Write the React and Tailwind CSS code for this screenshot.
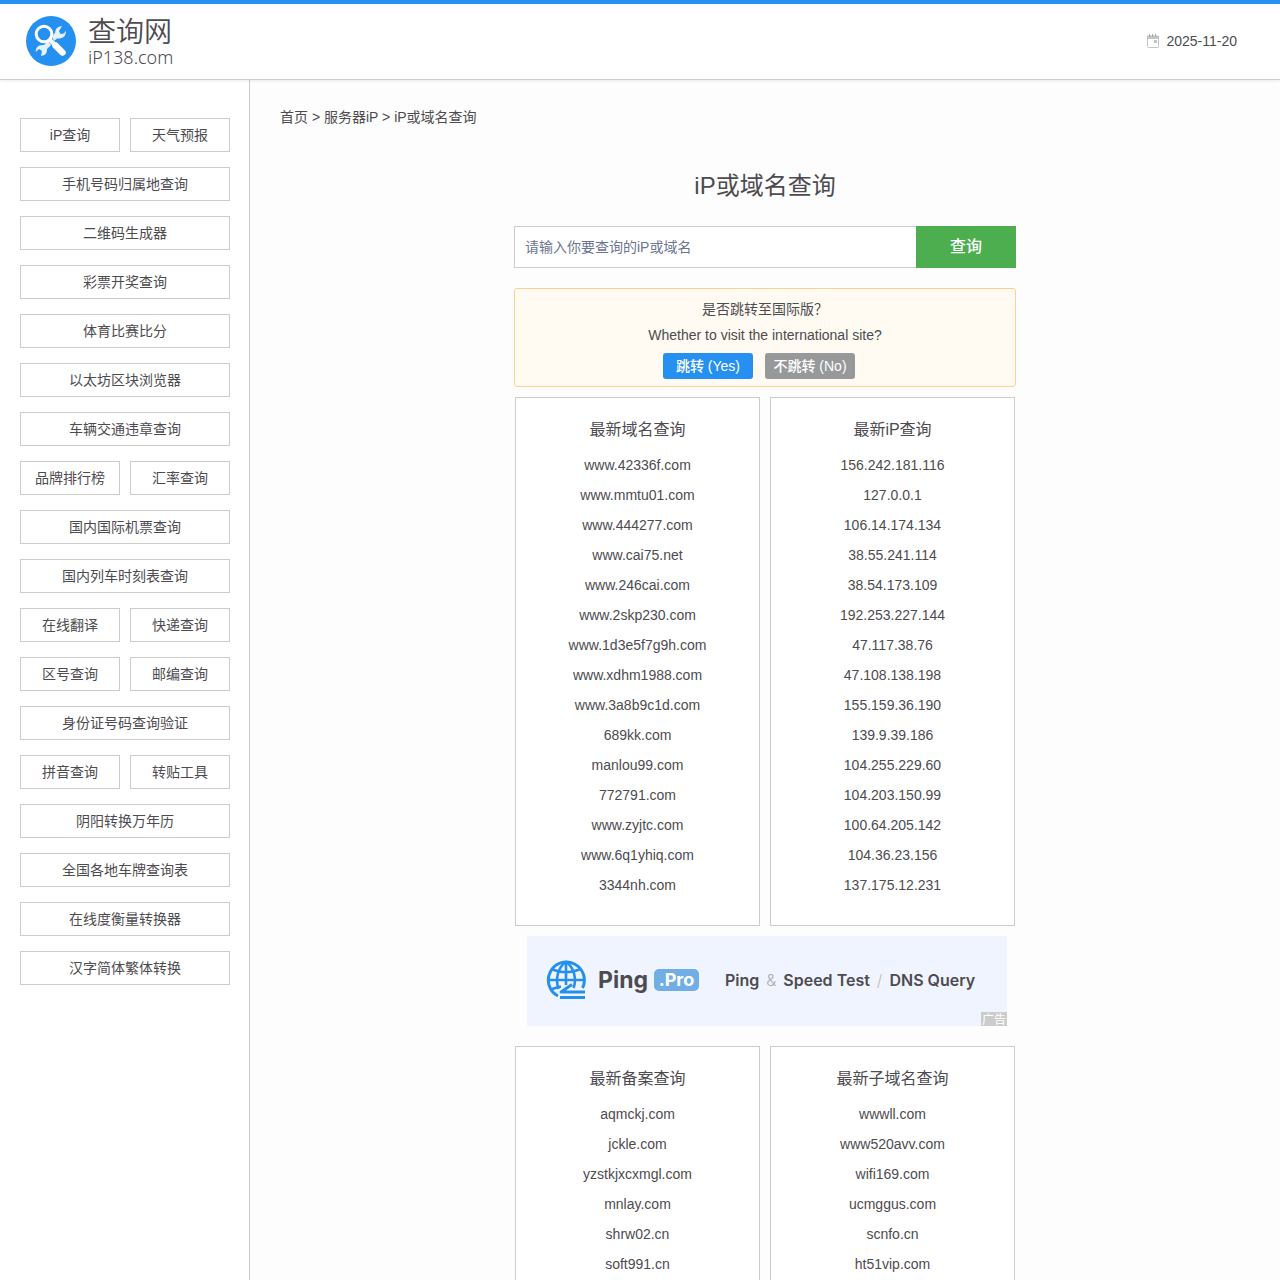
const sans = "font-['Liberation_Sans','Noto_Sans_CJK_SC',sans-serif]";

const navRows = [
  ["iP查询", "天气预报"],
  ["手机号码归属地查询"],
  ["二维码生成器"],
  ["彩票开奖查询"],
  ["体育比赛比分"],
  ["以太坊区块浏览器"],
  ["车辆交通违章查询"],
  ["品牌排行榜", "汇率查询"],
  ["国内国际机票查询"],
  ["国内列车时刻表查询"],
  ["在线翻译", "快递查询"],
  ["区号查询", "邮编查询"],
  ["身份证号码查询验证"],
  ["拼音查询", "转贴工具"],
  ["阴阳转换万年历"],
  ["全国各地车牌查询表"],
  ["在线度衡量转换器"],
  ["汉字简体繁体转换"],
];

const domains = ["www.42336f.com", "www.mmtu01.com", "www.444277.com", "www.cai75.net", "www.246cai.com", "www.2skp230.com", "www.1d3e5f7g9h.com", "www.xdhm1988.com", "www.3a8b9c1d.com", "689kk.com", "manlou99.com", "772791.com", "www.zyjtc.com", "www.6q1yhiq.com", "3344nh.com"];
const ips = ["156.242.181.116", "127.0.0.1", "106.14.174.134", "38.55.241.114", "38.54.173.109", "192.253.227.144", "47.117.38.76", "47.108.138.198", "155.159.36.190", "139.9.39.186", "104.255.229.60", "104.203.150.99", "100.64.205.142", "104.36.23.156", "137.175.12.231"];
const records = ["aqmckj.com", "jckle.com", "yzstkjxcxmgl.com", "mnlay.com", "shrw02.cn", "soft991.cn"];
const subdomains = ["wwwll.com", "www520avv.com", "wifi169.com", "ucmggus.com", "scnfo.cn", "ht51vip.com"];

function LogoMark() {
  return (
    <svg viewBox="0 0 50 50" className="size-[50px]" aria-hidden="true">
      <circle cx="25" cy="25" r="25" fill="#2590f0" />
      <path d="M26 20 L29 17 Q29 11 36 10 L33 15 L34.5 18 L38 17.5 L40 14.5 Q40.5 21 34 22.5 L31 22.5 L28 25Z" fill="#e4f1fe" />
      <path d="M22 25 L18 29 Q10 28 9.5 36 L13 33 L16 35 L15 40 Q21.5 39 21 33 L25 29Z" fill="#e4f1fe" />
      <path d="M24 24 L32 32" stroke="#fff" strokeWidth="4" />
      <path d="M29.5 29.5 L36.5 36.5" stroke="#fff" strokeWidth="6.5" strokeLinecap="round" />
      <circle cx="18" cy="18" r="7.8" fill="#2590f0" stroke="#fff" strokeWidth="3" />
    </svg>
  );
}

function CalendarIcon() {
  return (
    <svg viewBox="0 0 12 14" className="h-3.5 w-3" aria-hidden="true">
      <path d="M0.5 2 V12.5 Q0.5 13.5 1.5 13.5 H10.5 Q11.5 13.5 11.5 12.5 V2" fill="none" stroke="#c4c4c4" />
      <path d="M0 1.5H12V5H0Z" fill="#c4c4c4" />
      <path d="M2.5 0V3M5.5 0V3M8.5 0V3" stroke="#a8a8a8" />
      <rect x="7" y="6" width="3" height="3" fill="#c4c4c4" />
    </svg>
  );
}

function GlobeIcon() {
  return (
    <svg viewBox="0 0 40 40" className="size-10" fill="none" stroke="#2490ee" strokeWidth="3" aria-hidden="true">
      <path d="M36.5 28 A18 18 0 1 0 12 36" />
      <path d="M12.5 29 C9 19 12 7 20 2 C28 7 31 19 27.5 28" strokeWidth="2.6" />
      <path d="M20 2V25M2 20H38M6.5 9.5Q20 15 33.5 9.5M5 29.5Q10 27.5 15 26.5" strokeWidth="2.6" />
      <path d="M26 24.5L15 32H39M14 37.5H39" strokeLinejoin="round" />
    </svg>
  );
}

function Card({ title, items, open }) {
  return (
    <section className={`flex-1 border border-[#ccc] bg-white px-4 pt-4 text-center ${open ? "border-b-0" : "pb-[25px]"}`}>
      <h2 className="mb-1 text-base leading-8">{title}</h2>
      <ul>
        {items.map((item) => (
          <li key={item} className="leading-[30px]">
            <a href="#">{item}</a>
          </li>
        ))}
      </ul>
    </section>
  );
}

export default function App() {
  return (
    <div className={`flex h-screen flex-col overflow-hidden bg-[#fdfdfd] text-sm text-[#4d4b4f] ${sans}`}>
      <header className="relative flex h-20 shrink-0 items-center justify-between border-t-4 border-b border-t-[#2590f0] border-b-[#ccc] bg-white pr-[43px] pb-0.5 pl-[26px] shadow-[0_1px_3px_rgba(0,0,0,0.08)]">
        <a href="#" className="flex items-center gap-3">
          <LogoMark />
          <span className="flex flex-col pt-1">
            <span className="text-[28px] leading-7 font-[350]">查询网</span>
            <span className="font-['Noto_Sans',sans-serif] text-lg leading-5 font-light">iP138.com</span>
          </span>
        </a>
        <div className="flex items-center gap-[7px]">
          <CalendarIcon />
          <time dateTime="2025-11-20">2025-11-20</time>
        </div>
      </header>

      <div className="flex min-h-0 flex-1">
        <nav className="flex w-[250px] shrink-0 flex-col gap-[15px] border-r border-[#ccc] bg-white pt-[38px] pr-[19px] pl-5">
          {navRows.map((row) => (
            <div key={row[0]} className="flex gap-2.5">
              {row.map((label) => (
                <a key={label} href="#" className="flex-1 border border-[#ccc] bg-white text-center leading-8">
                  {label}
                </a>
              ))}
            </div>
          ))}
        </nav>

        <main className="flex min-w-0 flex-1 flex-col">
          <div className="px-[30px] pt-[26px] leading-[22px]">
            <a href="#">首页</a> &gt; <a href="#">服务器iP</a> &gt; <a href="#">iP或域名查询</a>
          </div>
          <div className="mx-auto flex w-full max-w-[502px] flex-1 flex-col">
            <h1 className="mt-10 text-center text-2xl leading-9">iP或域名查询</h1>
            <form className="mt-[22px] flex" onSubmit={(e) => e.preventDefault()}>
              <input
                type="text"
                aria-label="iP或域名"
                placeholder="请输入你要查询的iP或域名"
                className="h-[42px] min-w-0 flex-1 border border-r-0 border-[#ccc] bg-white px-2.5 outline-none placeholder:text-[#6b7590]"
              />
              <button type="submit" className="w-[100px] bg-[#4cae4f] text-base font-medium text-white">查询</button>
            </form>
            <div className="mt-5 rounded-[3px] border border-[#ffd190] bg-[#fffaf2] py-[7px] text-center leading-[26px]">
              <p>是否跳转至国际版？</p>
              <p>Whether to visit the international site?</p>
              <div className="mt-[5px] flex justify-center gap-3 pr-3 font-medium text-white">
                <button type="button" className="w-[90px] rounded-[3px] bg-[#2590f0]">跳转 (Yes)</button>
                <button type="button" className="w-[90px] rounded-[3px] bg-[#969899]">不跳转 (No)</button>
              </div>
            </div>
            <div className="mt-2.5 flex gap-2.5 px-px">
              <Card title="最新域名查询" items={domains} />
              <Card title="最新iP查询" items={ips} />
            </div>
            <a href="#" className="relative mt-2.5 ml-[13px] flex h-[90px] w-[480px] shrink-0 items-center bg-[#f0f4ff] pb-0.5 pl-[19px] font-['Inter',sans-serif] font-semibold">
              <GlobeIcon />
              <span className="ml-3 w-[51px] text-[23px] leading-6 font-bold">Ping</span>
              <span className="ml-[5px] w-[45px] rounded-[5px] bg-[#72aee6] text-center text-lg leading-[22px] font-bold text-white">.Pro</span>
              <span className="ml-[26px] flex gap-[7px] text-base whitespace-nowrap">
                <span>Ping</span>
                <span className="font-light text-[#aaa]">&amp;</span>
                <span>Speed Test</span>
                <span className="font-light text-[#bbb]">/</span>
                <span>DNS Query</span>
              </span>
              <span className="absolute right-0 bottom-0 h-3.5 w-[26px] bg-[#ccc] text-center font-['Noto_Sans_CJK_SC',sans-serif] text-xs leading-[14px] font-normal text-white">广告</span>
            </a>
            <div className="mt-5 flex flex-1 gap-2.5 px-px">
              <Card title="最新备案查询" items={records} open />
              <Card title="最新子域名查询" items={subdomains} open />
            </div>
          </div>
        </main>
      </div>
    </div>
  );
}
